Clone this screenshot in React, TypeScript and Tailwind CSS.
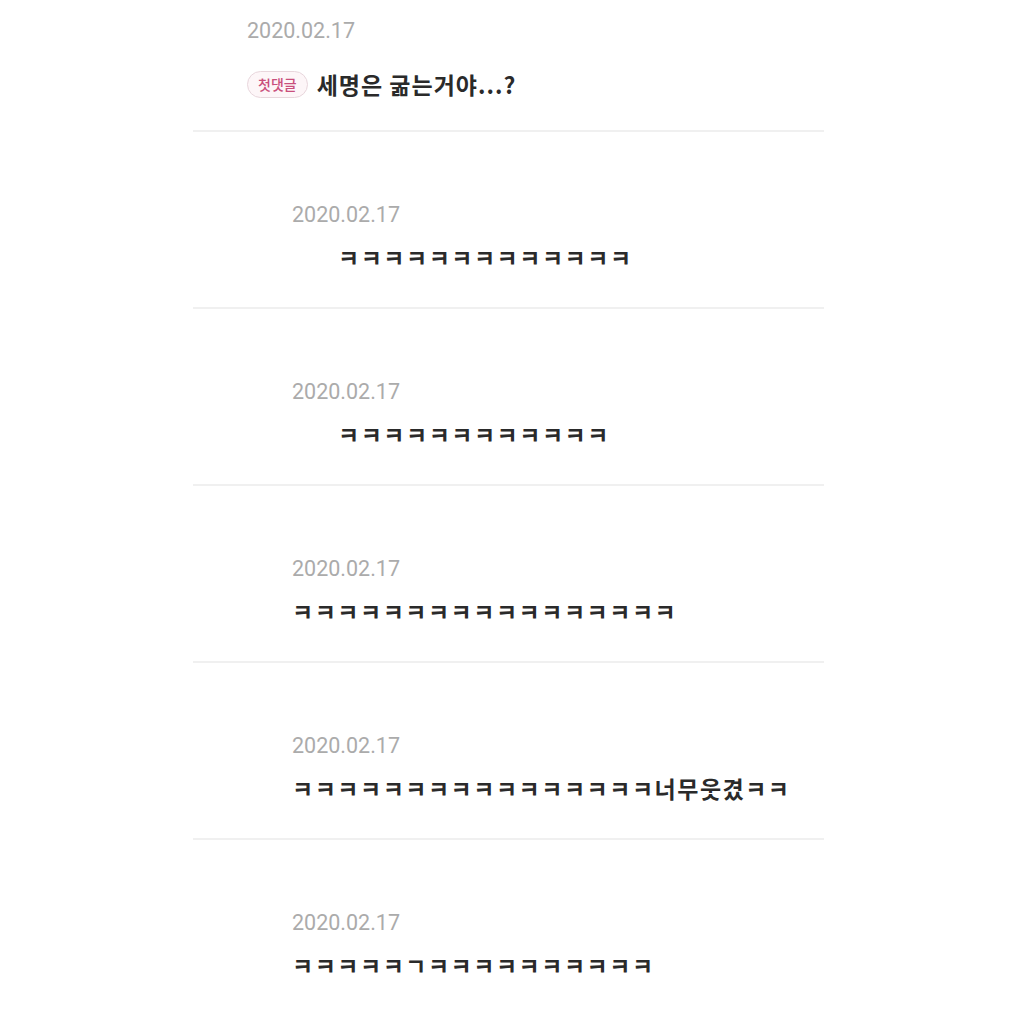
import React from "react";

type Reply = {
  date: string;
  text: string;
  indent?: boolean;
};

const replies: Reply[] = [
  { date: "2020.02.17", text: "ㅋㅋㅋㅋㅋㅋㅋㅋㅋㅋㅋㅋㅋ", indent: true },
  { date: "2020.02.17", text: "ㅋㅋㅋㅋㅋㅋㅋㅋㅋㅋㅋㅋ", indent: true },
  { date: "2020.02.17", text: "ㅋㅋㅋㅋㅋㅋㅋㅋㅋㅋㅋㅋㅋㅋㅋㅋㅋ" },
  { date: "2020.02.17", text: "ㅋㅋㅋㅋㅋㅋㅋㅋㅋㅋㅋㅋㅋㅋㅋㅋ너무웃겼ㅋㅋ" },
  { date: "2020.02.17", text: "ㅋㅋㅋㅋㅋㄱㅋㅋㅋㅋㅋㅋㅋㅋㅋㅋ" },
];

function Divider() {
  return <div className="h-[2px] w-full bg-[#f0f0f0]" />;
}

function DateLine({ date }: { date: string }) {
  return (
    <p className="font-['Roboto','Liberation_Sans',sans-serif] text-[21.5px] leading-[28px] text-[#ababab]">
      {date}
    </p>
  );
}

function ReplyItem({ reply, last }: { reply: Reply; last: boolean }) {
  return (
    <div>
      <div className="pl-[99px] pt-[69px] pb-[35px]">
        <DateLine date={reply.date} />
        <p
          className={
            "mt-[13px] font-['Noto_Sans_CJK_KR',sans-serif] text-[23px] leading-[30px] font-semibold tracking-[1.5px] text-[#2a2a2a] whitespace-nowrap " +
            (reply.indent ? "pl-[46px]" : "")
          }
        >
          {reply.text}
        </p>
      </div>
      {!last && <Divider />}
    </div>
  );
}

export default function App() {
  return (
    <div className="w-[1024px] h-[1024px] bg-white overflow-hidden">
      <div className="ml-[193px] w-[631px]">
        {/* original comment */}
        <div className="pl-[54px] pt-[17px] pb-[31px]">
          <DateLine date="2020.02.17" />
          <div className="mt-[24px] flex items-center gap-[9px] h-[30px]">
            <span className="flex items-center justify-center h-[27px] px-[10px] rounded-full border-[1.5px] border-[#e8d6dc] bg-[#fdf6f8] font-['Noto_Sans_CJK_KR',sans-serif] text-[14px] leading-none font-medium text-[#c94f7c]">
              첫댓글
            </span>
            <span className="font-['Noto_Sans_CJK_KR',sans-serif] text-[23px] leading-[30px] font-semibold tracking-[1px] text-[#2a2a2a]">
              세명은 굶는거야...?
            </span>
          </div>
        </div>
        <Divider />
        {replies.map((r, i) => (
          <ReplyItem key={i} reply={r} last={i === replies.length - 1} />
        ))}
      </div>
    </div>
  );
}
